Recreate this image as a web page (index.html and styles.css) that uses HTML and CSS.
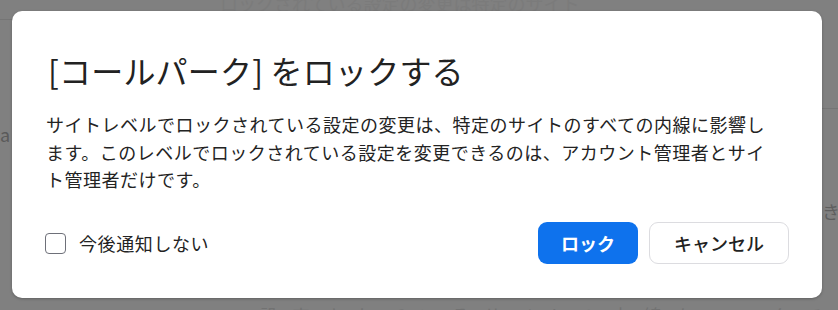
FILE: index.html
```html
<!DOCTYPE html>
<html lang="ja">
<head>
<meta charset="utf-8">
<link rel="stylesheet" href="styles.css">
</head>
<body>
<div class="page">
  <div class="backdrop">
    <div class="bg-top">ロックされている設定の変更は特定のサイト</div>
    <div class="bg-cols">
      <div class="bg-left">
        <div class="bg-rule"></div>
        <div class="bg-letter">a</div>
      </div>
      <div class="bg-right">
        <div class="bg-rule bg-rule-right"></div>
        <div class="bg-ki"><span class="bg-ki-text">きます</span></div>
      </div>
    </div>
    <div class="bg-bottom">設定されているサイトの内線をロックできます管理者設定</div>
  </div>
  <div class="dialog" role="dialog">
    <h1 class="title">[コールパーク] をロックする</h1>
    <p class="body">サイトレベルでロックされている設定の変更は、特定のサイトのすべての内線に影響します。このレベルでロックされている設定を変更できるのは、アカウント管理者とサイト管理者だけです。</p>
    <div class="footer">
      <label class="check">
        <span class="box"></span>
        <span class="check-label">今後通知しない</span>
      </label>
      <div class="actions">
        <button class="btn btn-primary">ロック</button>
        <button class="btn btn-secondary">キャンセル</button>
      </div>
    </div>
  </div>
</div>
</body>
</html>
```

FILE: styles.css
```css
* { box-sizing: border-box; }
html, body { margin: 0; padding: 0; }
body {
  font-family: "Noto Sans CJK JP", "Noto Sans", sans-serif;
  background: #808080;
}
.page {
  position: relative;
  width: 838px;
  height: 310px;
  overflow: hidden;
  background: #808080;
}
.backdrop {
  display: flex;
  flex-direction: column;
  height: 310px;
  color: #6f6f6f;
  font-size: 18px;
}
.bg-top {
  height: 19px;
  line-height: 20px;
  margin-top: -7px;
  padding-left: 220px;
  color: #7b7b7b;
  white-space: nowrap;
  overflow: hidden;
}
.bg-cols {
  display: grid;
  grid-template-columns: 420px 1fr;
  flex: 1;
  margin-top: 7px;
}
.bg-rule {
  height: 1px;
  background: #757575;
}
.bg-letter {
  margin-top: 102px;
  padding-left: 0;
  line-height: 24px;
  color: #5a5a5a;
}
.bg-rule-right { margin-top: 89px; }
.bg-ki {
  margin-top: 90px;
  line-height: 24px;
  padding-left: 402px;
  white-space: nowrap;
  color: #5e5e5e;
}
.bg-bottom {
  height: 12px;
  line-height: 24px;
  padding-left: 260px;
  color: #727272;
  letter-spacing: 14px;
  white-space: nowrap;
  overflow: hidden;
  margin-bottom: -5px;
}

.dialog {
  position: absolute;
  left: 12px;
  top: 11px;
  width: 810px;
  height: 287px;
  background: #fff;
  border-radius: 10px;
  box-shadow: 0 1px 3px rgba(0,0,0,0.25);
  padding: 35px 33px 34px 34px;
  display: flex;
  flex-direction: column;
  color: #222;
}
.title {
  margin: 0;
  font-size: 32px;
  font-weight: 400;
  line-height: 48px;
  padding-left: 2px;
  letter-spacing: 0.2px;
}
.body {
  margin: 17px 0 0;
  font-size: 18px;
  line-height: 27.5px;
  letter-spacing: 0.5px;
  width: 730px;
  color: #232323;
}
.footer {
  margin-top: auto;
  display: flex;
  align-items: center;
  justify-content: space-between;
}
.check {
  display: flex;
  align-items: center;
  gap: 13px;
}
.box {
  width: 21px;
  height: 21px;
  border: 1.5px solid #6e7079;
  border-radius: 4px;
  margin-left: -1px;
}
.check-label {
  font-size: 18px;
  letter-spacing: 0.6px;
  color: #232323;
}
.actions {
  display: flex;
  gap: 11px;
}
.btn {
  font-family: "Noto Sans CJK JP", "Noto Sans", sans-serif;
  font-size: 18px;
  height: 42px;
  border-radius: 9px;
  cursor: pointer;
  line-height: 1;
}
.btn-primary {
  width: 100px;
  background: #0e72ed;
  border: none;
  color: #fff;
  font-weight: 700;
}
.btn-secondary {
  width: 140px;
  background: #fff;
  border: 1px solid #dcdce0;
  color: #222;
  font-weight: 500;
}
```
